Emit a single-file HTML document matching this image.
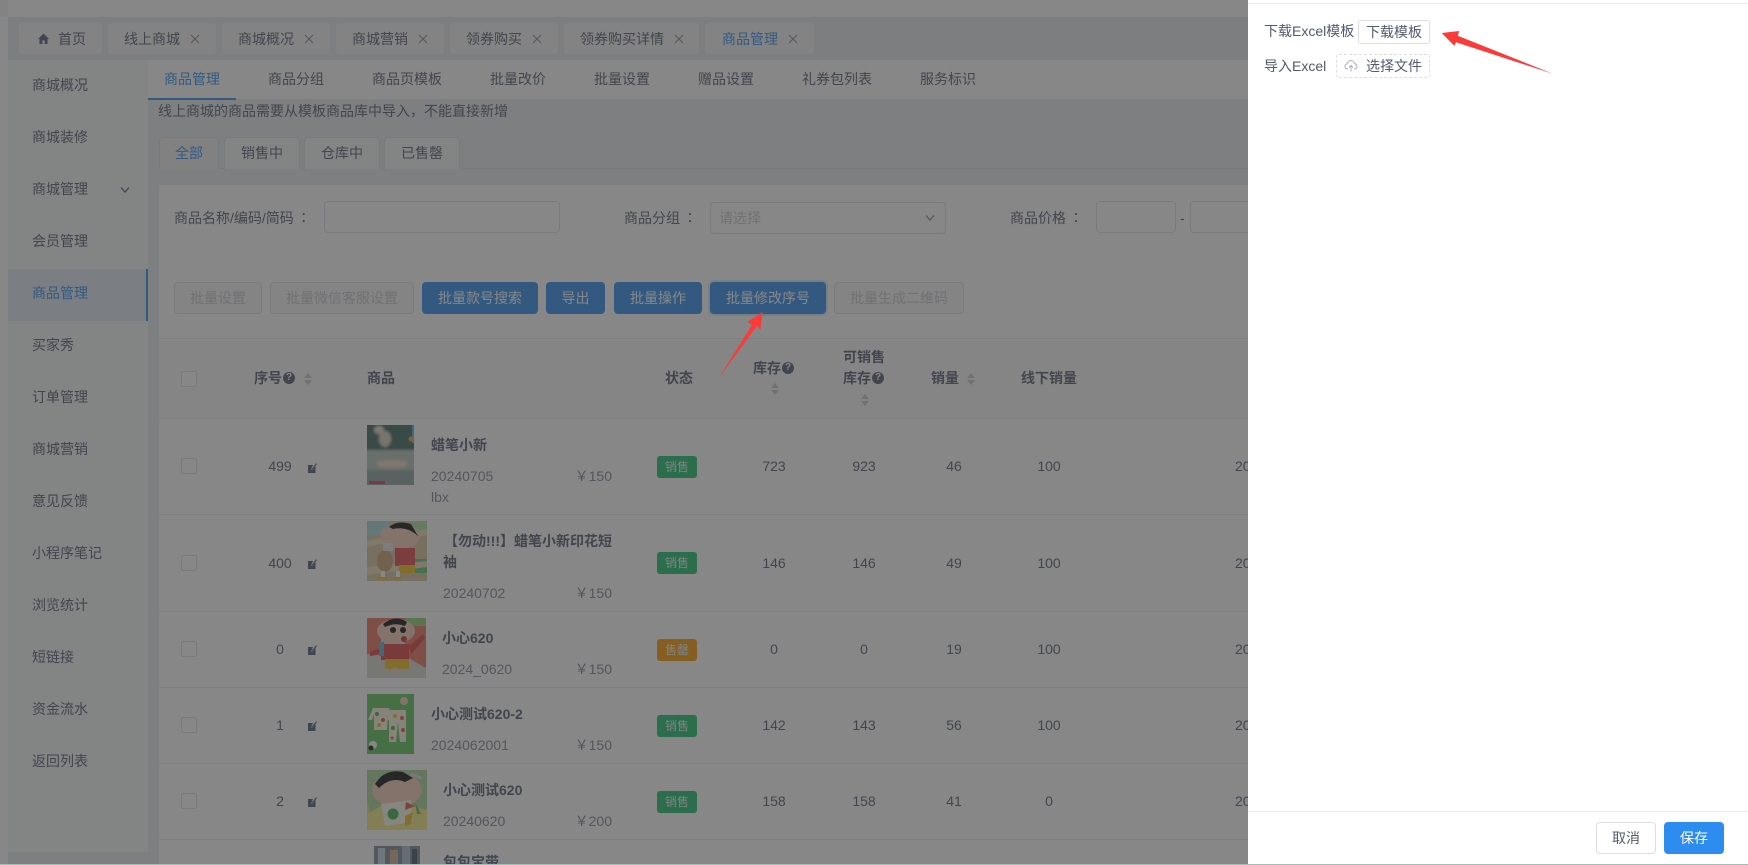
<!DOCTYPE html>
<html lang="zh"><head><meta charset="utf-8"><title>商品管理</title>
<style>
*{box-sizing:border-box}
html,body{margin:0;padding:0;width:1748px;height:865px;overflow:hidden;background:#fff}
body{font:14px/20px "Liberation Sans","Noto Sans CJK SC",sans-serif;color:#515a6e;position:relative}
.a,.t,.b,.tab,.tg,.cb,.e,.q,.s,.n,.x,.l,svg.p{position:absolute}
.t{white-space:nowrap;height:20px;line-height:20px}
.co{font-family:"Noto Sans CJK TC",sans-serif;display:inline-block;margin-left:3px}
.tab{top:23px;height:31px;background:#f4f5f6;border-radius:3px}
.tab b{position:absolute;top:6px;font-weight:400;line-height:20px;white-space:nowrap;color:#515a6e}
.x{width:10px;height:10px;top:11px}
.m{left:32px;color:#515a6e}
.sn{top:69px;color:#515a6e}
.c{top:137px;height:32px;background:#f6f7f8;border:1px solid #dcdee2;border-bottom:0;border-radius:4px 4px 0 0;text-align:center;line-height:31px}
.i{background:#fff;border:1px solid #dcdee2;border-radius:4px;height:32px}
.b{top:282px;height:32px;border-radius:4px;text-align:center;line-height:30px;border:1px solid #2d8cf0;background:#2d8cf0;color:#ffffff;white-space:nowrap}
.d{background:#f7f7f7;border-color:#dcdee2;color:#c5c8ce}
.h{font-weight:700;color:#515a6e}
.l{left:159px;width:1090px;height:1px;background:#e8eaec}
.cb{left:181px;width:16px;height:16px;background:#fff;border:1px solid #dcdee2;border-radius:2px}
.n{width:80px;text-align:center;height:20px;line-height:20px;color:#515a6e}
.e{left:308px;width:9px;height:10px}
.s{width:8px;height:12px}
.q{width:12px;height:12px;border-radius:50%;background:#515a6e;color:#fff;font-size:10px;line-height:12px;text-align:center;font-weight:700}
.tg{left:657px;width:40px;height:22px;border-radius:3px;background:#19be6b;color:#e8f6ee;font-size:12px;line-height:22px;text-align:center}
.g{color:#808695}
.pr{left:560px;width:52px;text-align:right;color:#808695}
svg{display:block}
</style></head><body>
<svg width="0" height="0" style="position:absolute"><defs>
<symbol id="xx" viewBox="0 0 10 10"><path d="M1 1L9 9M9 1L1 9" stroke="#808695" stroke-width="1" fill="none"/></symbol>
<symbol id="ed" viewBox="0 0 9 10"><path d="M0 2H5L3.6 5.2L3.4 7L5 6.2L7.5 3V10H0Z" fill="#515a6e"/><path d="M4.3 6L8.6 .6" stroke="#515a6e" stroke-width="1.1" fill="none"/></symbol>
<symbol id="so" viewBox="0 0 8 12"><path d="M4 0L8 5H0ZM0 7H8L4 12Z" fill="#c5c8ce"/></symbol>
<filter id="bl"><feGaussianBlur stdDeviation="1.2"/></filter>
</defs></svg>

<!-- backdrop page -->
<div class="a" style="left:8px;top:0;width:1240px;height:17px;background:#fff"></div>
<div class="a" style="left:0;top:0;width:8px;height:865px;background:#fff"></div>
<div class="a" style="left:0;top:0;width:8px;height:17px;background:#f4f4f4"></div>
<div class="a" style="left:8px;top:17px;width:1240px;height:43px;background:#e6e8ec"></div>

<div class="tab" style="left:19px;width:83px"><svg class="p" style="left:19px;top:10px" width="11" height="11" viewBox="0 0 11 11"><path d="M5.5 .5L11 6H9.5V11H6.6V7.4H4.4V11H1.5V6H0Z" fill="#515a6e"/></svg><b style="left:39px">首页</b></div>
<div class="tab" style="left:108px;width:108px"><b style="left:16px">线上商城</b><svg class="x" style="left:82px"><use href="#xx"/></svg></div>
<div class="tab" style="left:222px;width:108px"><b style="left:16px">商城概况</b><svg class="x" style="left:82px"><use href="#xx"/></svg></div>
<div class="tab" style="left:336px;width:108px"><b style="left:16px">商城营销</b><svg class="x" style="left:82px"><use href="#xx"/></svg></div>
<div class="tab" style="left:450px;width:108px"><b style="left:16px">领券购买</b><svg class="x" style="left:82px"><use href="#xx"/></svg></div>
<div class="tab" style="left:564px;width:135px"><b style="left:16px">领券购买详情</b><svg class="x" style="left:110px"><use href="#xx"/></svg></div>
<div class="tab" style="left:705px;width:109px"><b style="left:17px;color:#2d8cf0">商品管理</b><svg class="x" style="left:83px"><use href="#xx"/></svg></div>

<!-- sidebar -->
<div class="a" style="left:8px;top:60px;width:140px;height:792px;background:#f6f7f8"></div>
<div class="a" style="left:8px;top:852px;width:140px;height:13px;background:#e9ebee"></div>
<div class="a" style="left:148px;top:60px;width:1100px;height:805px;background:#e9ebef"></div>
<div class="a" style="left:8px;top:269px;width:140px;height:52px;background:#e0e9f3"></div>
<div class="a" style="left:146px;top:269px;width:2px;height:52px;background:#2d8cf0"></div>
<div class="t m" style="top:75px">商城概况</div>
<div class="t m" style="top:127px">商城装修</div>
<div class="t m" style="top:179px">商城管理</div>
<svg class="p" style="left:120px;top:186px" width="10" height="8" viewBox="0 0 10 8"><path d="M1 1.5L5 6L9 1.5" stroke="#515a6e" stroke-width="1.3" fill="none"/></svg>
<div class="t m" style="top:231px">会员管理</div>
<div class="t m" style="top:283px;color:#2d8cf0">商品管理</div>
<div class="t m" style="top:335px">买家秀</div>
<div class="t m" style="top:387px">订单管理</div>
<div class="t m" style="top:439px">商城营销</div>
<div class="t m" style="top:491px">意见反馈</div>
<div class="t m" style="top:543px">小程序笔记</div>
<div class="t m" style="top:595px">浏览统计</div>
<div class="t m" style="top:647px">短链接</div>
<div class="t m" style="top:699px">资金流水</div>
<div class="t m" style="top:751px">返回列表</div>

<!-- sub nav -->
<div class="a" style="left:148px;top:60px;width:1100px;height:39px;background:#fff"></div>
<div class="a" style="left:148px;top:98px;width:88px;height:1.5px;background:#2d8cf0"></div>
<div class="t sn" style="left:164px;color:#2d8cf0">商品管理</div>
<div class="t sn" style="left:268px">商品分组</div>
<div class="t sn" style="left:372px">商品页模板</div>
<div class="t sn" style="left:490px">批量改价</div>
<div class="t sn" style="left:594px">批量设置</div>
<div class="t sn" style="left:698px">赠品设置</div>
<div class="t sn" style="left:802px">礼券包列表</div>
<div class="t sn" style="left:920px">服务标识</div>
<div class="t" style="left:158px;top:101px">线上商城的商品需要从模板商品库中导入，不能直接新增</div>

<!-- card tabs -->
<div class="a" style="left:159px;top:168px;width:1089px;height:1px;background:#dcdee2"></div>
<div class="t c" style="left:159px;width:60px;color:#2d8cf0;background:#f0f1f3">全部</div>
<div class="t c" style="left:224px;width:76px">销售中</div>
<div class="t c" style="left:304px;width:76px">仓库中</div>
<div class="t c" style="left:384px;width:76px">已售罄</div>

<!-- panel -->
<div class="a" style="left:159px;top:185px;width:1089px;height:680px;background:#fff"></div>
<div class="t" style="left:174px;top:208px">商品名称/编码/简码<span class="co">：</span></div>
<div class="a i" style="left:324px;top:201px;width:236px"></div>
<div class="t" style="left:624px;top:208px">商品分组<span class="co">：</span></div>
<div class="a i" style="left:710px;top:202px;width:236px"></div>
<div class="t" style="left:719px;top:208px;color:#c5c8ce">请选择</div>
<svg class="p" style="left:925px;top:214px" width="10" height="8" viewBox="0 0 10 8"><path d="M1 1.5L5 6L9 1.5" stroke="#808695" stroke-width="1.3" fill="none"/></svg>
<div class="t" style="left:1010px;top:208px">商品价格<span class="co">：</span></div>
<div class="a i" style="left:1096px;top:201px;width:80px"></div>
<div class="t" style="left:1180px;top:208px">-</div>
<div class="a i" style="left:1190px;top:201px;width:70px;border-right:0"></div>

<div class="b d" style="left:174px;width:88px">批量设置</div>
<div class="b d" style="left:270px;width:144px">批量微信客服设置</div>
<div class="b" style="left:422px;width:116px">批量款号搜索</div>
<div class="b" style="left:546px;width:59px">导出</div>
<div class="b" style="left:614px;width:88px">批量操作</div>
<div class="b" style="left:710px;width:116px;box-shadow:0 0 0 2px rgba(45,140,240,.2)">批量修改序号</div>
<div class="b d" style="left:834px;width:130px">批量生成二维码</div>

<!-- table -->
<div class="l" style="top:338px"></div><div class="a" style="left:159px;top:339px;width:1089px;height:79px;background:#f9fafb"></div>
<div class="l" style="top:418px"></div><div class="l" style="top:514px"></div><div class="l" style="top:611px"></div><div class="l" style="top:687px"></div><div class="l" style="top:763px"></div><div class="l" style="top:839px"></div>
<div class="cb" style="top:371px"></div><div class="cb" style="top:458px;height:16px"></div><div class="cb" style="top:555px"></div><div class="cb" style="top:641px"></div><div class="cb" style="top:717px"></div><div class="cb" style="top:793px"></div>

<div class="t h" style="left:254px;top:368px">序号</div><div class="q" style="left:283px;top:372px">?</div><svg class="s" style="left:304px;top:373px"><use href="#so"/></svg>
<div class="t h" style="left:367px;top:368px">商品</div>
<div class="t h" style="left:665px;top:368px">状态</div>
<div class="t h" style="left:753px;top:358px">库存</div><div class="q" style="left:782px;top:362px">?</div><svg class="s" style="left:771px;top:383px"><use href="#so"/></svg>
<div class="t h" style="left:843px;top:347px">可销售</div><div class="t h" style="left:843px;top:368px">库存</div><div class="q" style="left:872px;top:372px">?</div><svg class="s" style="left:861px;top:394px"><use href="#so"/></svg>
<div class="t h" style="left:931px;top:368px">销量</div><svg class="s" style="left:967px;top:373px"><use href="#so"/></svg>
<div class="t h" style="left:1021px;top:368px">线下销量</div>

<!-- row numbers -->
<div class="n" style="left:240px;top:456px">499</div><svg class="e" style="top:463px"><use href="#ed"/></svg>
<div class="n" style="left:240px;top:553px">400</div><svg class="e" style="top:559px"><use href="#ed"/></svg>
<div class="n" style="left:240px;top:639px">0</div><svg class="e" style="top:645px"><use href="#ed"/></svg>
<div class="n" style="left:240px;top:715px">1</div><svg class="e" style="top:721px"><use href="#ed"/></svg>
<div class="n" style="left:240px;top:791px">2</div><svg class="e" style="top:797px"><use href="#ed"/></svg>

<!-- thumbs -->
<svg class="p" style="left:367px;top:425px" width="47" height="60" viewBox="0 0 47 60"><rect width="47" height="60" fill="#8aa8a0"/><g filter="url(#bl)"><rect y="-2" x="-2" width="51" height="27" fill="#3c6660"/><ellipse cx="12" cy="5" rx="5" ry="4" fill="#e6dcc8"/><ellipse cx="18" cy="14" rx="6" ry="8" fill="#d8d0c0"/><rect x="-2" y="25" width="51" height="20" fill="#b4c2b6"/><ellipse cx="25" cy="39" rx="16" ry="4" fill="#ecdac8"/><rect x="-2" y="45" width="51" height="17" fill="#8ea2a0"/></g><rect x="45" y="0" width="2" height="18" fill="#4cb3e8"/><circle cx="44" cy="14" r="2.5" fill="#f0a040"/><rect x="2" y="56" width="16" height="3" fill="#d04070"/></svg>
<svg class="p" style="left:367px;top:521px" width="60" height="60" viewBox="0 0 60 60"><rect width="60" height="60" fill="#d8c49c"/><rect width="22" height="14" fill="#a8dcd8"/><rect x="44" width="16" height="12" fill="#a8e0a0"/><rect x="48" y="38" width="12" height="14" fill="#60c070"/><path d="M0 20L60 8V14L0 26ZM0 46L60 40V46L0 54Z" fill="#ecdcb8"/><ellipse cx="33" cy="15" rx="20" ry="12.5" fill="#f4cdb8"/><path d="M22 6Q30 -1 44 3L51 15Q40 5 26 8Z" fill="#101010"/><rect x="28" y="27" width="20" height="18" fill="#e04848"/><rect x="32" y="44" width="16" height="8" fill="#f0c020"/><ellipse cx="18" cy="40" rx="8" ry="11" fill="#c8a070"/><rect x="16" y="22" width="10" height="8" fill="#e6e6e6"/><rect x="14" y="50" width="4" height="6" fill="#fff"/><rect x="29" y="50" width="4" height="6" fill="#fff"/><path d="M10 56H20V59H10ZM26 56H34V59H26Z" fill="#f0c020"/></svg>
<svg class="p" style="left:367px;top:618px" width="59" height="60" viewBox="0 0 59 60"><rect width="59" height="60" fill="#d8d8d0"/><path d="M0 0H59V6L59 50L38 38V6H0Z" fill="#e87060"/><rect y="0" x="0" width="14" height="36" fill="#e87060"/><rect x="38" width="21" height="8" fill="#90d070"/><ellipse cx="29" cy="13" rx="19" ry="12" fill="#f4cdb8"/><path d="M16 6Q28 -4 40 4L38 8Q28 4 18 9Z" fill="#101010"/><circle cx="26" cy="12" r="3" fill="#111"/><circle cx="36" cy="12" r="3" fill="#111"/><circle cx="37" cy="21" r="3" fill="#c03030"/><rect x="14" y="26" width="28" height="16" fill="#e04040"/><path d="M42 28L56 16L58 20L44 36Z" fill="#e04040"/><path d="M14 30L3 34V38L16 36Z" fill="#e04040"/><rect x="18" y="41" width="24" height="10" fill="#f0c020"/><rect x="26" y="50" width="4" height="8" fill="#f4cdb8"/><rect x="12" y="24" width="5" height="14" fill="#60b0d0"/></svg>
<svg class="p" style="left:367px;top:694px" width="47" height="60" viewBox="0 0 47 60"><rect width="47" height="60" fill="#5ec45a"/><circle cx="37" cy="7" r="4" fill="#f4cdb8"/><path d="M6 14H22L26 26H21V20L20 36H7V20L5 26H1Z" fill="#fdf6e0"/><path d="M22 16H39L39 48H33L31 28L29 48H22Z" fill="#fdf6e0"/><circle cx="10" cy="20" r="2" fill="#40a840"/><circle cx="16" cy="26" r="2" fill="#e85050"/><circle cx="12" cy="31" r="2" fill="#f0c020"/><circle cx="28" cy="22" r="2" fill="#f0c020"/><circle cx="35" cy="24" r="2" fill="#e85050"/><circle cx="26" cy="34" r="2" fill="#40a840"/><circle cx="36" cy="36" r="2" fill="#e85050"/><circle cx="25" cy="44" r="1.5" fill="#e85050"/><circle cx="6" cy="51" r="4" fill="#fff"/><circle cx="4" cy="54" r="2.5" fill="#301010"/></svg>
<svg class="p" style="left:367px;top:770px" width="60" height="60" viewBox="0 0 60 60"><rect width="60" height="60" fill="#a8d898"/><path d="M0 30L8 60H0ZM44 40L60 44V60H44Z" fill="#f0e070"/><path d="M0 44L24 30L60 40V60H0Z" fill="#f6e880"/><ellipse cx="30" cy="20" rx="25" ry="17" fill="#f4cdb8"/><path d="M8 14Q18 -2 36 2L46 8L38 12Q24 6 12 18Z" fill="#101010"/><path d="M44 4L54 8" stroke="#dddddd" stroke-width="3"/><path d="M14 34L44 30L46 52L18 56Z" fill="#fdfdf0"/><circle cx="26" cy="44" r="5.5" fill="#40b048"/><path d="M39 32L48 36L38 40Z" fill="#e85040"/><path d="M38 46L46 42L44 54L38 56Z" fill="#f0c020"/><path d="M48 32L54 44L50 44Z" fill="#60b860"/></svg>
<svg class="p" style="left:374px;top:846px" width="46" height="19" viewBox="0 0 46 19"><rect width="46" height="19" fill="#7a8a98"/><rect x="4" y="2" width="7" height="17" fill="#c8d4de"/><rect x="16" y="4" width="8" height="15" fill="#d8b090"/><rect x="28" y="0" width="8" height="19" fill="#a8c0d0"/><rect x="38" y="3" width="5" height="16" fill="#405060"/></svg>

<!-- product text -->
<div class="t h" style="left:431px;top:435px">蜡笔小新</div>
<div class="t g" style="left:431px;top:466px">20240705</div><div class="t pr" style="top:466px">￥150</div>
<div class="t g" style="left:431px;top:487px">lbx</div>
<div class="t h" style="left:437px;top:531px;width:175px;text-align:right">【勿动!!!】蜡笔小新印花短</div>
<div class="t h" style="left:443px;top:552px">袖</div>
<div class="t g" style="left:443px;top:583px">20240702</div><div class="t pr" style="top:583px">￥150</div>
<div class="t h" style="left:442px;top:628px">小心620</div>
<div class="t g" style="left:442px;top:659px">2024_0620</div><div class="t pr" style="top:659px">￥150</div>
<div class="t h" style="left:431px;top:704px">小心测试620-2</div>
<div class="t g" style="left:431px;top:735px">2024062001</div><div class="t pr" style="top:735px">￥150</div>
<div class="t h" style="left:443px;top:780px">小心测试620</div>
<div class="t g" style="left:443px;top:811px">20240620</div><div class="t pr" style="top:811px">￥200</div>
<div class="t h" style="left:443px;top:852px">包包宝带</div>

<!-- status -->
<div class="tg" style="top:456px">销售</div>
<div class="tg" style="top:552px">销售</div>
<div class="tg" style="top:639px;background:#ff9900">售罄</div>
<div class="tg" style="top:715px">销售</div>
<div class="tg" style="top:791px">销售</div>

<!-- numbers -->
<div class="n" style="left:734px;top:456px">723</div><div class="n" style="left:824px;top:456px">923</div><div class="n" style="left:914px;top:456px">46</div><div class="n" style="left:1009px;top:456px">100</div>
<div class="n" style="left:734px;top:553px">146</div><div class="n" style="left:824px;top:553px">146</div><div class="n" style="left:914px;top:553px">49</div><div class="n" style="left:1009px;top:553px">100</div>
<div class="n" style="left:734px;top:639px">0</div><div class="n" style="left:824px;top:639px">0</div><div class="n" style="left:914px;top:639px">19</div><div class="n" style="left:1009px;top:639px">100</div>
<div class="n" style="left:734px;top:715px">142</div><div class="n" style="left:824px;top:715px">143</div><div class="n" style="left:914px;top:715px">56</div><div class="n" style="left:1009px;top:715px">100</div>
<div class="n" style="left:734px;top:791px">158</div><div class="n" style="left:824px;top:791px">158</div><div class="n" style="left:914px;top:791px">41</div><div class="n" style="left:1009px;top:791px">0</div>
<div class="t" style="left:1235px;top:456px">20</div><div class="t" style="left:1235px;top:553px">20</div><div class="t" style="left:1235px;top:639px">20</div><div class="t" style="left:1235px;top:715px">20</div><div class="t" style="left:1235px;top:791px">20</div>

<!-- mask -->
<div class="a" style="left:0;top:0;width:1748px;height:865px;background:rgba(55,55,55,.6)"></div>

<!-- drawer -->
<div class="a" style="left:1248px;top:0;width:500px;height:865px;background:#fff"></div>
<div class="a" style="left:1248px;top:3px;width:500px;height:1px;background:#e8eaec"></div>
<div class="t" style="left:1264px;top:21px">下载Excel模板</div>
<div class="a" style="left:1358px;top:20px;width:72px;height:24px;border:1px solid #dcdee2;border-radius:3px;text-align:center;line-height:22px;color:#515a6e">下载模板</div>
<div class="t" style="left:1264px;top:56px">导入Excel</div>
<div class="a" style="left:1336px;top:54px;width:94px;height:24px;border:1px dashed #dcdee2;border-radius:3px"></div>
<svg class="p" style="left:1344px;top:60px" width="14" height="12" viewBox="0 0 14 12"><path d="M4 9H3.2A2.6 2.6 0 0 1 3 3.9A4 4 0 0 1 10.8 3.7A2.7 2.7 0 0 1 10.8 9H10" stroke="#a8adb6" fill="none"/><path d="M7 11.5V5.5M5 7.5L7 5.5L9 7.5" stroke="#a8adb6" fill="none"/></svg>
<div class="t" style="left:1366px;top:56px">选择文件</div>
<div class="a" style="left:1248px;top:811px;width:500px;height:1px;background:#e8eaec"></div>
<div class="a" style="left:1596px;top:822px;width:60px;height:32px;border:1px solid #dcdee2;border-radius:4px;text-align:center;line-height:30px;color:#515a6e">取消</div>
<div class="a" style="left:1664px;top:822px;width:60px;height:32px;background:#2d8cf0;border-radius:4px;text-align:center;line-height:32px;color:#fff">保存</div>

<div class="a" style="left:0;top:864px;width:1748px;height:1px;background:#a3bcbc"></div>

<!-- arrows -->
<svg class="p" style="left:0;top:0" width="1748" height="865" viewBox="0 0 1748 865"><path d="M1441.7 33L1459.3 31L1457.7 35.7L1552.7 73.7L1456 42.3L1454.3 45.7Z" fill="#fb3a3a"/><path d="M762.5 312L747.5 322L752 325L718 379L757 326L760.5 330Z" fill="#fb3a3a"/></svg>
</body></html>
